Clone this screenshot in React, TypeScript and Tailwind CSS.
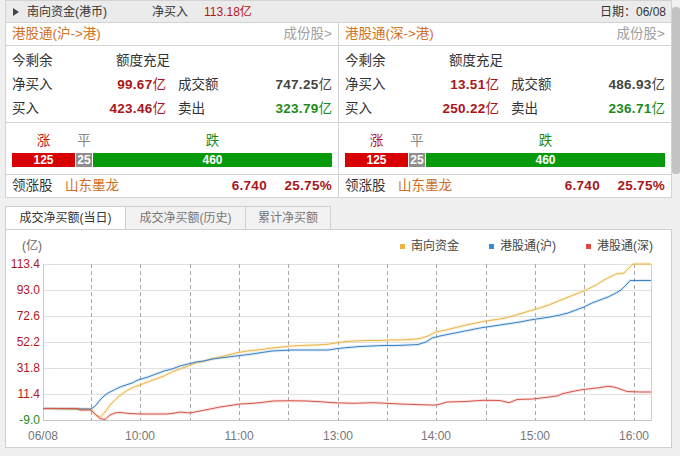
import React from 'react';

// ─── Datos de los dos paneles (沪 / 深) ─────────────────────────────
const PANELS = [
  { title: '港股通(沪->港)', net: '99.67', turnover: '747.25', buy: '423.46', sell: '323.79' },
  { title: '港股通(深->港)', net: '13.51', turnover: '486.93', buy: '250.22', sell: '236.71' },
];

const Y_TICKS = [
  { v: '113.4', y: 264 },
  { v: '93.0', y: 290 },
  { v: '72.6', y: 316 },
  { v: '52.2', y: 342 },
  { v: '31.8', y: 368 },
  { v: '11.4', y: 394 },
  { v: '-9.0', y: 420 },
];

const X_LINES = [91, 140, 190, 239, 288, 338, 387, 436, 486, 535, 584, 634];

const X_LABELS: [string, number][] = [
  ['06/08', 43],
  ['10:00', 140],
  ['11:00', 239],
  ['13:00', 338],
  ['14:00', 436],
  ['15:00', 535],
  ['16:00', 634],
];

// coordenadas de página (x, y)
const YELLOW =
  '43,408.5 91,409.5 93,412 97,416 101,416.5 105,412 110,405 118,397 126,391 134,387 140,385 153,380 164,376 172,372 180,369 188,366 196,363 204,361 212,359 220,357 228,355 236,353 244,351.5 252,350.5 262,349.5 272,348 282,347 292,346 302,345.5 314,345 326,344.5 336,343 346,341.5 356,341 366,340.5 378,340.5 390,340 400,340 410,339.5 420,338.5 428,336 436,332 446,330 456,327.5 466,325 476,323 486,321 496,319.5 506,318 516,315 526,312 536,309 546,306 556,302 566,298 576,294 586,290 596,285 604,280 610,277 616,274 624,273 628,269 633,264 651,264';

const BLUE =
  '43,408.5 91,409 94,407 97,404 100,400 104,396 108,393 114,390 120,387 126,385 132,383 138,380 148,377 156,374 164,371 172,369 180,366 188,364 196,362 204,361 212,359 220,358 228,357 236,356 244,355 252,354 262,352.5 272,351 282,350.5 292,350 304,350 316,350 328,350 338,348.5 348,347.5 360,346.5 372,346 384,345.5 396,345.5 408,345 418,344.5 426,342 432,338 440,336 450,334 460,332 470,330 480,328 490,326.5 500,325 510,323.5 520,322 530,320 540,318.5 550,317 560,315 568,313 576,310 584,307 592,303 600,300 608,297 616,293 621,290 626,285 630,280.5 651,280.5';

const RED =
  '43,408.5 77,408.5 80,410 91,410 95,414 100,418.5 105,419.5 110,415 115,413 120,412.5 130,413.5 140,414 155,414 167,414 175,413 180,412 190,413 200,411 210,409 220,407 230,405.5 240,404 250,403.5 260,402.7 273,401 290,400.7 307,401 320,401.7 333,402.7 353,403.3 373,402.7 387,403.3 400,404 415,404.5 430,405 437,405 442,403.5 447,402 465,401.5 483,400.3 500,400.5 509,402.7 517,399.5 533,399 545,397.5 557,396 563,393.5 575,391 583,389.5 597,388 608,386.3 614,387 620,389 627,391.5 640,392 651,392';

function Num({ v, color }: { v: string; color: string }) {
  return (
    <span className={color}>
      <span className="font-bold tracking-[0.3px] text-[13.5px]">{v}</span>
      <span>亿</span>
    </span>
  );
}

function Panel({ p, first }: { p: (typeof PANELS)[number]; first: boolean }) {
  return (
    <div className={`bg-white border-r border-[#d3d3d3] ${first ? 'border-l' : ''} flex flex-col`}>
      {/* título */}
      <div className="h-[23px] border-b border-[#d3d3d3] px-[6px] flex items-center justify-between">
        <span className="text-[#d2711f]">{p.title}</span>
        <span className="text-[#a0a0a0]">成份股&gt;</span>
      </div>

      {/* cifras */}
      <div className="h-[77px] border-b border-[#d3d3d3] px-[6px] pt-[3px] text-[#333]">
        <div className="h-[24px] flex items-center">
          <span className="w-[104px]">今剩余</span>
          <span>额度充足</span>
        </div>
        <div className="h-[24px] flex items-center">
          <span className="w-[70px]">净买入</span>
          <span className="w-[84px] text-right">
            <Num v={p.net} color="text-[#a8161a]" />
          </span>
          <span className="ml-[12px]">成交额</span>
          <span className="flex-1 text-right">
            <Num v={p.turnover} color="text-[#444]" />
          </span>
        </div>
        <div className="h-[24px] flex items-center">
          <span className="w-[70px]">买入</span>
          <span className="w-[84px] text-right">
            <Num v={p.buy} color="text-[#a8161a]" />
          </span>
          <span className="ml-[12px]">卖出</span>
          <span className="flex-1 text-right">
            <Num v={p.sell} color="text-[#1d8a1d]" />
          </span>
        </div>
      </div>

      {/* barra 涨 / 平 / 跌 */}
      <div className="h-[52px] border-b border-[#d3d3d3] px-[6px] pt-[9px]">
        <div className="h-[18px] flex items-center gap-[1px]">
          <span className="w-[63px] text-center text-[#b8161a]">涨</span>
          <span className="w-[16px] text-center text-[#888]">平</span>
          <span className="flex-1 text-center text-[#1d8a1d]">跌</span>
        </div>
        <div className="mt-[3px] h-[14px] flex gap-[1px] text-white text-[12px] font-bold leading-[14px]">
          <span className="w-[63px] bg-[#d80000] text-center">125</span>
          <span className="w-[16px] bg-[#8e8e8e] text-center">25</span>
          <span className="flex-1 bg-[#089a0a] text-center">460</span>
        </div>
      </div>

      {/* líder */}
      <div className="h-[23px] border-b border-[#d3d3d3] px-[6px] flex items-center">
        <span className="w-[53px] text-[#333]">领涨股</span>
        <span className="flex-1 text-[#cd6d1f]">山东墨龙</span>
        <span className="font-bold text-[13.5px] tracking-[0.3px] text-[#a8161a]">6.740</span>
        <span className="w-[65px] text-right font-bold text-[13.5px] tracking-[0.3px] text-[#a8161a]">25.75%</span>
      </div>
    </div>
  );
}

function Chart() {
  return (
    <svg width="665" height="188" className="block" fontFamily="Liberation Sans, sans-serif">
      <g transform="translate(-6 -258)">
        {Y_TICKS.slice(0, 6).map((t) => (
          <line key={t.y} x1="43" x2="651" y1={t.y + 0.5} y2={t.y + 0.5} stroke="#e0e0e0" />
        ))}
        {X_LINES.map((x) => (
          <line key={x} x1={x + 0.5} x2={x + 0.5} y1="264" y2="420" stroke="#a8a8a8" strokeDasharray="4 3" />
        ))}
        <line x1="43.5" x2="43.5" y1="264" y2="421" stroke="#c8c8c8" />
        <line x1="651.5" x2="651.5" y1="264" y2="421" stroke="#d0d0d0" />
        <line x1="43" x2="652" y1="420.5" y2="420.5" stroke="#c8c8c8" />

        {[YELLOW, BLUE, RED].map((pts, i) => (
          <polyline
            key={'h' + i}
            points={pts}
            fill="none"
            strokeWidth="3"
            stroke={['#f3c86a', '#7fb0e0', '#eb8f86'][i]}
            strokeOpacity="0.25"
          />
        ))}
        <polyline points={YELLOW} fill="none" stroke="#ebb54a" strokeWidth="1" />
        <polyline points={BLUE} fill="none" stroke="#3a82c4" strokeWidth="1" />
        <polyline points={RED} fill="none" stroke="#d4574c" strokeWidth="1" />

        {Y_TICKS.map((t, i) => (
          <text
            key={t.v}
            x="40"
            y={t.y + 4}
            textAnchor="end"
            fontSize="12"
            fill={i === 6 ? '#1d8a1d' : '#b3161a'}
          >
            {t.v}
          </text>
        ))}
        {X_LABELS.map(([l, x]) => (
          <text key={l} x={x} y="439.5" textAnchor="middle" fontSize="12" fill="#777">
            {l}
          </text>
        ))}
      </g>
    </svg>
  );
}

export default function App() {
  return (
    <div className="w-[680px] h-[456px] overflow-hidden bg-[#f0f0f0] flex text-[13.5px] leading-none font-[family-name:'Liberation_Sans','Noto_Sans_CJK_SC',sans-serif]">
      <div className="ml-[5px] w-[667px] flex flex-col">
        {/* cabecera */}
        <div className="h-[23px] border border-[#d3d3d3] bg-[#ebebeb] px-[7px] flex items-center text-[12px] text-[#333]">
          <svg width="6" height="8" viewBox="0 0 6 8" className="shrink-0">
            <polygon points="0,0 6,4 0,8" fill="#444" />
          </svg>
          <span className="ml-[8px] w-[125px]">南向资金(港币)</span>
          <span>净买入</span>
          <span className="ml-[16px] text-[#b3161a]">113.18亿</span>
          <span className="ml-auto mr-[-2px]">日期：06/08</span>
        </div>

        <div className="grid grid-cols-[334px_333px]">
          {PANELS.map((p, i) => (
            <Panel key={p.title} p={p} first={i === 0} />
          ))}
        </div>

        <div className="h-[8px]" />

        {/* pestañas */}
        <div className="h-[23px] flex text-[12px]">
          <div className="w-[120px] border-t border-l border-[#cfcfcf] bg-white text-[#333] flex items-center justify-center">
            成交净买额(当日)
          </div>
          <div className="w-[120px] border-t border-l border-[#cfcfcf] bg-[#f2f2f2] text-[#777] flex items-center justify-center">
            成交净买额(历史)
          </div>
          <div className="w-[86px] border-t border-x border-[#cfcfcf] bg-[#f2f2f2] text-[#777] flex items-center justify-center">
            累计净买额
          </div>
        </div>

        {/* gráfico */}
        <div className="h-[219px] border border-[#cfcfcf] bg-white flex flex-col">
          <div className="h-[28px] pt-[4px] pl-[16px] pr-[18px] flex items-center text-[12px]">
            <span className="text-[#666]">(亿)</span>
            <div className="ml-auto flex items-center gap-[30px] text-[#444]">
              <span className="flex items-center gap-[6px]">
                <span className="w-[5px] h-[5px] bg-[#efb540]" />
                南向资金
              </span>
              <span className="flex items-center gap-[6px]">
                <span className="w-[5px] h-[5px] bg-[#3a88d8]" />
                港股通(沪)
              </span>
              <span className="flex items-center gap-[6px]">
                <span className="w-[5px] h-[5px] bg-[#e04a3c]" />
                港股通(深)
              </span>
            </div>
          </div>
          <Chart />
        </div>
      </div>

      {/* barra de desplazamiento */}
      <div className="w-[8px] pt-[7px]">
        <div className="h-[167px] rounded-[3px] bg-[#c3c3c3]" />
      </div>
    </div>
  );
}
